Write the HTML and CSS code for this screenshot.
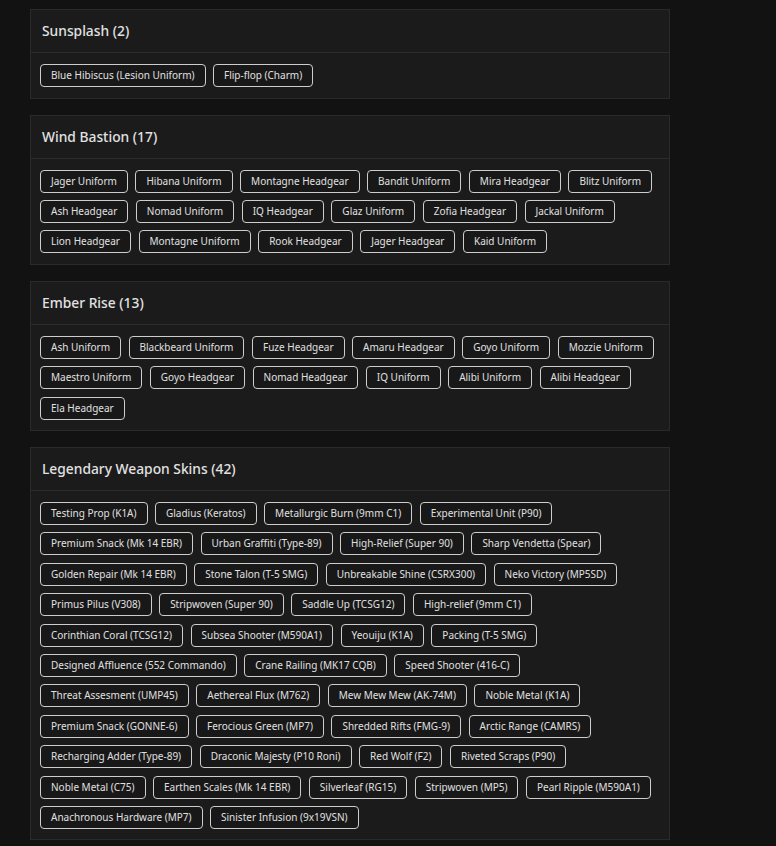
FILE: index.html
```html
<!DOCTYPE html>
<html>
<head>
<meta charset="utf-8">
<link rel="stylesheet" href="styles.css">
</head>
<body>
<main class="page">
  <section class="card">
    <h2 class="card-title">Sunsplash (2)</h2>
    <div class="chips">
      <span class="chip">Blue Hibiscus (Lesion Uniform)</span>
      <span class="chip">Flip-flop (Charm)</span>
    </div>
  </section>
  <section class="card">
    <h2 class="card-title">Wind Bastion (17)</h2>
    <div class="chips">
      <span class="chip">Jager Uniform</span>
      <span class="chip">Hibana Uniform</span>
      <span class="chip">Montagne Headgear</span>
      <span class="chip">Bandit Uniform</span>
      <span class="chip">Mira Headgear</span>
      <span class="chip">Blitz Uniform</span>
      <span class="chip">Ash Headgear</span>
      <span class="chip">Nomad Uniform</span>
      <span class="chip">IQ Headgear</span>
      <span class="chip">Glaz Uniform</span>
      <span class="chip">Zofia Headgear</span>
      <span class="chip">Jackal Uniform</span>
      <span class="chip">Lion Headgear</span>
      <span class="chip">Montagne Uniform</span>
      <span class="chip">Rook Headgear</span>
      <span class="chip">Jager Headgear</span>
      <span class="chip">Kaid Uniform</span>
    </div>
  </section>
  <section class="card">
    <h2 class="card-title">Ember Rise (13)</h2>
    <div class="chips">
      <span class="chip">Ash Uniform</span>
      <span class="chip">Blackbeard Uniform</span>
      <span class="chip">Fuze Headgear</span>
      <span class="chip">Amaru Headgear</span>
      <span class="chip">Goyo Uniform</span>
      <span class="chip">Mozzie Uniform</span>
      <span class="chip">Maestro Uniform</span>
      <span class="chip">Goyo Headgear</span>
      <span class="chip">Nomad Headgear</span>
      <span class="chip">IQ Uniform</span>
      <span class="chip">Alibi Uniform</span>
      <span class="chip">Alibi Headgear</span>
      <span class="chip">Ela Headgear</span>
    </div>
  </section>
  <section class="card">
    <h2 class="card-title">Legendary Weapon Skins (42)</h2>
    <div class="chips">
      <span class="chip">Testing Prop (K1A)</span>
      <span class="chip">Gladius (Keratos)</span>
      <span class="chip">Metallurgic Burn (9mm C1)</span>
      <span class="chip">Experimental Unit (P90)</span>
      <span class="chip">Premium Snack (Mk 14 EBR)</span>
      <span class="chip">Urban Graffiti (Type-89)</span>
      <span class="chip">High-Relief (Super 90)</span>
      <span class="chip">Sharp Vendetta (Spear)</span>
      <span class="chip">Golden Repair (Mk 14 EBR)</span>
      <span class="chip">Stone Talon (T-5 SMG)</span>
      <span class="chip">Unbreakable Shine (CSRX300)</span>
      <span class="chip">Neko Victory (MP5SD)</span>
      <span class="chip">Primus Pilus (V308)</span>
      <span class="chip">Stripwoven (Super 90)</span>
      <span class="chip">Saddle Up (TCSG12)</span>
      <span class="chip">High-relief (9mm C1)</span>
      <span class="chip">Corinthian Coral (TCSG12)</span>
      <span class="chip">Subsea Shooter (M590A1)</span>
      <span class="chip">Yeouiju (K1A)</span>
      <span class="chip">Packing (T-5 SMG)</span>
      <span class="chip">Designed Affluence (552 Commando)</span>
      <span class="chip">Crane Railing (MK17 CQB)</span>
      <span class="chip">Speed Shooter (416-C)</span>
      <span class="chip">Threat Assesment (UMP45)</span>
      <span class="chip">Aethereal Flux (M762)</span>
      <span class="chip">Mew Mew Mew (AK-74M)</span>
      <span class="chip">Noble Metal (K1A)</span>
      <span class="chip">Premium Snack (GONNE-6)</span>
      <span class="chip">Ferocious Green (MP7)</span>
      <span class="chip">Shredded Rifts (FMG-9)</span>
      <span class="chip">Arctic Range (CAMRS)</span>
      <span class="chip">Recharging Adder (Type-89)</span>
      <span class="chip">Draconic Majesty (P10 Roni)</span>
      <span class="chip">Red Wolf (F2)</span>
      <span class="chip">Riveted Scraps (P90)</span>
      <span class="chip">Noble Metal (C75)</span>
      <span class="chip">Earthen Scales (Mk 14 EBR)</span>
      <span class="chip">Silverleaf (RG15)</span>
      <span class="chip">Stripwoven (MP5)</span>
      <span class="chip">Pearl Ripple (M590A1)</span>
      <span class="chip">Anachronous Hardware (MP7)</span>
      <span class="chip">Sinister Infusion (9x19VSN)</span>
    </div>
  </section>
</main>
</body>
</html>
```
FILE: styles.css
```css
html, body {
  margin: 0;
  padding: 0;
  background: #121212;
}
body {
  font-family: "Noto Sans", "Open Sans", sans-serif;
  color: #dcdcdc;
}
.page {
  padding: 9px 0 0 30px;
  display: flex;
  flex-direction: column;
  gap: 16px;
  width: 640px;
}
.card {
  background: #1b1b1b;
  border: 1px solid #2a2a2a;
}
.card-title {
  margin: 0;
  height: 43px;
  box-sizing: border-box;
  display: flex;
  align-items: center;
  padding: 0 11px 1px 11px;
  font-size: 13.8px;
  font-weight: 500;
  color: #e2e2e2;
  border-bottom: 1px solid #2c2c2c;
}
.chips {
  display: flex;
  flex-wrap: wrap;
  gap: 7.4px 7.5px;
  padding: 11px 9px 10.5px 9px;
}
.chip {
  display: inline-block;
  font-size: 10px;
  line-height: 15px;
  padding: 3px 10px;
  border: 1px solid #cdcdcd;
  border-radius: 4px;
  background: #181818;
  color: #e0e0e0;
  white-space: nowrap;
}
```
